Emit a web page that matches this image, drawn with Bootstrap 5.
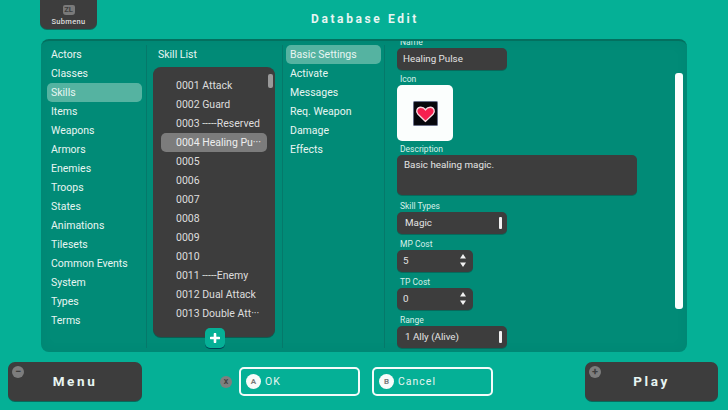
<!DOCTYPE html>
<html><head><meta charset="utf-8">
<link href="https://cdn.jsdelivr.net/npm/bootstrap@5.3.0/dist/css/bootstrap.min.css" rel="stylesheet">
<style>
html,body{width:728px;height:410px;overflow:hidden}
body{background:#05b096;font-family:Roboto,sans-serif;font-size:10.5px;color:#e8f5f2;letter-spacing:0}
.topbar{height:39px;position:relative}
.subtab{position:absolute;left:40px;top:0;width:57px;height:29px;background:#3d3d3d;border-radius:0 0 7px 7px;box-shadow:0 1px 0 #0a6f60;font-size:7.5px;font-weight:500;letter-spacing:.3px;color:#ddd;text-align:center;line-height:9px}
.zlkey{width:12px;height:10px;background:#7a7a7a;border-radius:2px 2px 3px 3px;margin:5px auto 2px;color:#3d3d3d;font-size:7.5px;line-height:10px;font-weight:700;letter-spacing:0}
.apptitle{font-size:12px;font-weight:700;letter-spacing:2.6px;line-height:39px;text-align:center;padding-left:2px}
.panel{margin-left:41px;width:646px;height:313px;background:#018b77;border-radius:8px;border-top:2px solid #03705f;box-shadow:inset 0 0 14px rgba(0,0,0,.04);overflow:hidden;padding-top:4px}
.colnav{width:106px;padding:0 4px 0 6px;border-right:1px solid #05796a;margin-bottom:4px;flex:none}
.collist{width:136px;padding:0 7px 0 6px;border-right:1px solid #05796a;margin-bottom:4px;flex:none;position:relative}
.coltabs{width:102px;padding:0 3px;border-right:1px solid #05796a;margin-bottom:4px;flex:none}
.colform{flex:1;position:relative;padding:0 0 0 12px;margin-top:-8px}
.navrow{height:19px;line-height:19px;padding-left:4px;border-radius:5px;white-space:nowrap}
.navrow.on{background:#55b3a1}
.listhead{padding:0 0 0 5px;height:22px;line-height:19px}
.darklist{background:#3d3d3d;border-radius:8px;height:270px;box-shadow:0 1px 0 #0a5e52;padding:9px 8px 0;position:relative;color:#ddd}
.lrow{height:19px;line-height:19px;padding-left:15px;border-radius:5px;white-space:nowrap;width:106px}
.lrow.on{background:#7c7c7c;color:#eee}
.thumb{position:absolute;right:2px;top:7px;width:5px;height:14px;background:#9a9a9a;border-radius:2px}
.addbtn{position:absolute;left:58px;top:283px;width:20px;height:20px;background:#05b096;border-radius:5px;box-shadow:0 1px 0 #045;display:flex;align-items:center;justify-content:center}
.flabel{font-size:8.5px;line-height:11px;height:11px;padding-left:3px;color:#d6efe9;white-space:nowrap}
.fbox{background:#3d3d3d;border-radius:5px;height:22px;line-height:22px;padding-left:6px;box-shadow:0 1px 0 #07695b;color:#e4e4e4;position:relative;font-size:9.8px}
.w110{width:110px}.w76{width:76px}
.pl7{padding-left:8px}
.gap4{margin-bottom:4px}.gap5{margin-bottom:5px}
.bar{position:absolute;right:5px;top:5px;width:3px;height:12px;background:#f2f2f2;border-radius:1px}
.spin{position:absolute;right:7px;top:3px;display:block}
.iconbox{width:56px;height:56px;background:#fbfefd;border-radius:5px;display:flex;align-items:center;justify-content:center;margin-bottom:3px}
.descbox{width:240px;height:40px;background:#3d3d3d;border-radius:5px;padding:0 7px;line-height:20px;box-shadow:0 1px 0 #07695b;color:#e4e4e4;margin-bottom:6px;font-size:9.8px}
.vscroll{position:absolute;left:290px;top:36px;width:8px;height:236px;background:#fbfefd;border-radius:3px}
.bottom{height:58px;position:relative;padding:10px 10px 0 8px}
.bigbtn{width:134px;height:39px;background:#3d3d3d;border-radius:7px;box-shadow:0 1px 0 #07695b;font-size:13.5px;font-weight:700;letter-spacing:2.6px;line-height:39px;text-align:center;position:relative}
.bigbtn.playb{width:133px}
.minicirc{position:absolute;left:4px;top:4px;width:12px;height:12px;border-radius:50%;background:#7d7d7d;color:#3d3d3d;font-size:11px;line-height:11px;font-weight:700;letter-spacing:0;text-align:center}
.xcirc{width:12px;height:12px;border-radius:50%;background:#7f7f7f;color:#3d3d3d;font-size:7px;line-height:12px;font-weight:700;text-align:center;letter-spacing:0;margin-right:7px;flex:none}
.okwrap{margin-right:14px;height:39px}
.okbtn{width:121px;height:29px;border:2px solid #f4fbfa;border-radius:5px;display:flex;align-items:center;padding-left:5px;gap:4px;letter-spacing:1px;font-size:10.5px}
.okfirst{margin-right:12px}
.abcirc{width:15px;height:15px;flex:none;border-radius:50%;background:#f8fbfa;color:#7a7a7a;font-size:8px;font-weight:700;line-height:15px;text-align:center;letter-spacing:0}
</style></head>
<body>
<div class="topbar">
  <div class="subtab"><div class="zlkey">ZL</div>Submenu</div>
  <div class="apptitle">Database Edit</div>
</div>
<div class="panel d-flex">
  <div class="colnav">
    <div class="navrow">Actors</div><div class="navrow">Classes</div><div class="navrow on">Skills</div><div class="navrow">Items</div><div class="navrow">Weapons</div><div class="navrow">Armors</div><div class="navrow">Enemies</div><div class="navrow">Troops</div><div class="navrow">States</div><div class="navrow">Animations</div><div class="navrow">Tilesets</div><div class="navrow">Common Events</div><div class="navrow">System</div><div class="navrow">Types</div><div class="navrow">Terms</div>
  </div>
  <div class="collist">
    <div class="listhead">Skill List</div>
    <div class="darklist">
      <div class="thumb"></div>
      <div class="lrow">0001 Attack</div><div class="lrow">0002 Guard</div><div class="lrow">0003 -----Reserved</div><div class="lrow on">0004 Healing Pu···</div><div class="lrow">0005</div><div class="lrow">0006</div><div class="lrow">0007</div><div class="lrow">0008</div><div class="lrow">0009</div><div class="lrow">0010</div><div class="lrow">0011 -----Enemy</div><div class="lrow">0012 Dual Attack</div><div class="lrow">0013 Double Att···</div>
    </div>
    <div class="addbtn"><svg width="10" height="10" viewBox="0 0 10 10"><path d="M5 1v8M1 5h8" stroke="#fff" stroke-width="2.6" stroke-linecap="round"/></svg></div>
  </div>
  <div class="coltabs">
    <div class="navrow on">Basic Settings</div><div class="navrow">Activate</div><div class="navrow">Messages</div><div class="navrow">Req. Weapon</div><div class="navrow">Damage</div><div class="navrow">Effects</div>
  </div>
  <div class="colform">
    <div class="flabel">Name</div>
    <div class="fbox w110 gap4">Healing Pulse</div>
    <div class="flabel">Icon</div>
    <div class="iconbox">
      <svg width="25" height="25" viewBox="0 0 24 24"><rect width="24" height="24" rx="1.5" fill="#6a7088"/><rect x="1" y="1" width="22" height="22" fill="#07070c"/><path d="M12 19.6 4.6 12.4C2.6 10.2 3.6 6 7.4 6c2 0 3.6 1 4.6 2.4C13 7 14.600 6 16.600 6c3.800 0 4.800 4.200 2.800 6.400z" fill="#f5204f" stroke="#f6d8dd" stroke-width="1.300"/></svg>
    </div>
    <div class="flabel">Description</div>
    <div class="descbox">Basic healing magic.</div>
    <div class="flabel">Skill Types</div>
    <div class="fbox w110 pl7 gap5">Magic<span class="bar"></span></div>
    <div class="flabel">MP Cost</div>
    <div class="fbox w76 gap5">5<svg class="spin" width="6" height="15" viewBox="0 0 6 15"><path d="M3 1l3 4.500H0zM3 14l3-4.500H0z" fill="#f2f2f2"/></svg></div>
    <div class="flabel">TP Cost</div>
    <div class="fbox w76 gap5">0<svg class="spin" width="6" height="15" viewBox="0 0 6 15"><path d="M3 1l3 4.500H0zM3 14l3-4.500H0z" fill="#f2f2f2"/></svg></div>
    <div class="flabel">Range</div>
    <div class="fbox w110 pl7">1 Ally (Alive)<span class="bar"></span></div>
    <div class="vscroll"></div>
  </div>
</div>
<div class="bottom d-flex justify-content-between align-items-start">
  <div class="bigbtn"><span class="minicirc">−</span>Menu</div>
  <div class="d-flex align-items-center okwrap">
    <span class="xcirc">X</span>
    <div class="okbtn okfirst"><span class="abcirc">A</span>OK</div>
    <div class="okbtn"><span class="abcirc">B</span>Cancel</div>
  </div>
  <div class="bigbtn playb"><span class="minicirc">+</span>Play</div>
</div>
<script src="https://cdn.jsdelivr.net/npm/bootstrap@5.3.0/dist/js/bootstrap.bundle.min.js"></script>
</body></html>
